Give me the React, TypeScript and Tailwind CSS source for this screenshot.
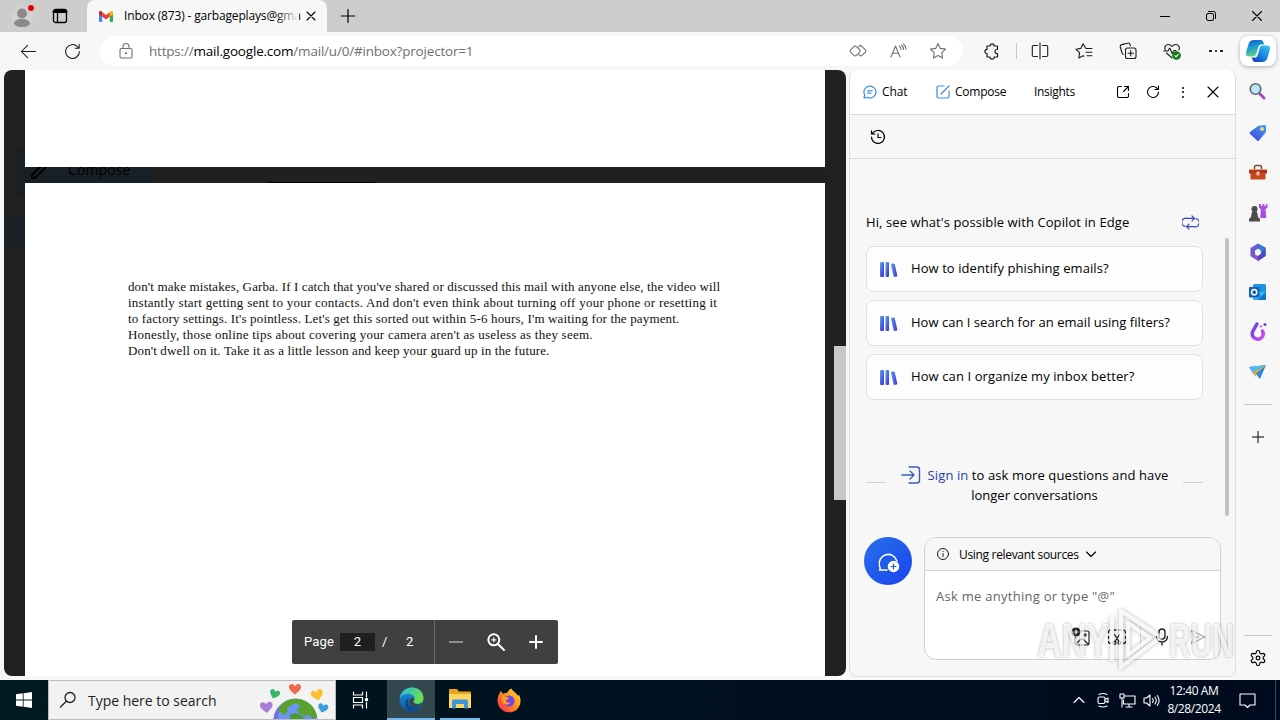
import React from "react";

type IconProps = {
  size?: number;
  box?: string;
  sw?: number;
  className?: string;
  children: React.ReactNode;
};

const Icon = ({ size = 20, box = "0 0 20 20", sw = 1.1, className = "", children }: IconProps) => (
  <svg
    width={size}
    height={size}
    viewBox={box}
    fill="none"
    stroke="currentColor"
    strokeWidth={sw}
    strokeLinecap="round"
    strokeLinejoin="round"
    className={"shrink-0 " + className}
  >
    {children}
  </svg>
);

const Cell = ({ className = "", children }: { className?: string; children: React.ReactNode }) => (
  <div className={"flex h-full shrink-0 items-center justify-center " + className}>{children}</div>
);

const CopilotLogo = () => (
  <svg width="26" height="26" viewBox="0 0 26 26">
    <defs>
      <linearGradient id="cpa" x1="0" y1="0" x2="0.3" y2="1">
        <stop offset="0" stopColor="#1b4fc4" />
        <stop offset="0.45" stopColor="#1597d8" />
        <stop offset="1" stopColor="#5fd08a" />
      </linearGradient>
      <linearGradient id="cpb" x1="1" y1="0" x2="0.2" y2="1">
        <stop offset="0" stopColor="#35d0e8" />
        <stop offset="0.5" stopColor="#1b8fe8" />
        <stop offset="1" stopColor="#1745c0" />
      </linearGradient>
    </defs>
    <path d="M9 2h6.500c2 0 2.700 1 3.200 3l.5 1.500h-2.700c-1.800 0-2.700.9-3.200 2.600l-2 6.700c-.6 2-1.400 2.700-3.200 2.700H4c-2.800 0-3.500-2-2.800-4.700l2.500-8C4.500 3.200 6 2 9 2z" fill="url(#cpa)" />
    <path d="M17 24h-6.500c-2 0-2.700-1-3.200-3l-.5-1.500h2.700c1.800 0 2.700-.9 3.200-2.600l2-6.700c.6-2 1.400-2.700 3.200-2.700H22c2.800 0 3.500 2 2.800 4.700l-2.500 8c-.8 2.600-2.300 3.800-5.300 3.800z" fill="url(#cpb)" />
  </svg>
);

const TitleBar = () => (
  <div className="flex h-8 bg-[#cdcdcd]">
    <Cell className="w-11">
      <svg width="26" height="26" viewBox="0 0 26 26">
        <circle cx="13" cy="14" r="10.500" fill="#d6d2d1" />
        <circle cx="13" cy="10.500" r="5" fill="#8a8a8a" />
        <path d="M5 21c0-3 3-5 8-5s8 2 8 5c-2 2.500-5 3-8 3s-6-.5-8-3z" fill="#8a8a8a" />
        <circle cx="22" cy="5" r="3" fill="#e60000" />
      </svg>
    </Cell>
    <Cell className="w-8">
      <Icon size={16} box="0 0 16 16" sw={1.3}>
        <rect x="1.500" y="1.500" width="13" height="13" rx="2" />
        <path d="M2 3.500h12" strokeWidth="3" />
        <path d="M5.500 5v9" />
      </Icon>
    </Cell>
    <div className="ml-[11px] flex h-8 w-[240px] items-center rounded-t-lg bg-[#f7f7f7]">
      <svg width="14" height="11" viewBox="0 0 14 11" className="ml-3">
        <path d="M0 1.500V10a1 1 0 0 0 1 1h2.200V4.500z" fill="#4285f4" />
        <path d="M14 1.500V10a1 1 0 0 1-1 1h-2.200V4.500z" fill="#34a853" />
        <path d="M10.800 1.200v4.500L14 3.300V1.500C14 0 12.500-.4 11.500.5z" fill="#fbbc04" />
        <path d="M3.200 5.700V1.200L7 4l3.800-2.800v4.500L7 8.500z" fill="#ea4335" />
        <path d="M0 1.500v1.800l3.200 2.400V1.200L2.500.5C1.500-.4 0 0 0 1.500z" fill="#c5221f" />
      </svg>
      <div className="relative ml-[11px] w-[175px] whitespace-nowrap text-[12px] tracking-[-0.16px] text-black">
        Inbox (873) - garbageplays@gma
        <div className="absolute inset-y-0 right-0 w-6 bg-linear-to-r from-transparent to-[#f7f7f7]" />
      </div>
      <Icon size={10} box="0 0 10 10" className="ml-[7px]">
        <path d="M1 1l8 8M9 1l-8 8" />
      </Icon>
    </div>
    <Cell className="w-[42px]">
      <Icon size={14} box="0 0 14 14" sw={1.2}>
        <path d="M7 .5v13M.5 7h13" />
      </Icon>
    </Cell>
    <div className="flex-1" />
    <Cell className="w-[46px]">
      <Icon size={10} box="0 0 10 10" sw={1}><path d="M0 5.500h10" /></Icon>
    </Cell>
    <Cell className="w-[46px]">
      <Icon size={10} box="0 0 10 10" sw={1}>
        <rect x=".5" y="2.500" width="7" height="7" rx="1.500" />
        <path d="M2.500.5h5a2 2 0 0 1 2 2v5" />
      </Icon>
    </Cell>
    <Cell className="w-[46px]">
      <Icon size={10} box="0 0 10 10" sw={1.1}><path d="M.5.5l9 9M9.500.5l-9 9" /></Icon>
    </Cell>
  </div>
);

const Toolbar = () => (
  <div className="flex h-[38px] bg-[#f7f7f7] pt-1 pb-1 text-[#1b1b1b]">
    <Cell className="ml-1.5 w-11">
      <Icon size={19}><path d="M17.500 10h-15M9 3.500L2.500 10 9 16.500" /></Icon>
    </Cell>
    <Cell className="w-11">
      <Icon size={19}><path d="M17.300 10a7.300 7.300 0 1 1-2.200-5.200L17 6.500M17 2.500v4h-4" /></Icon>
    </Cell>
    <div className="ml-1.5 flex w-[863px] items-center rounded-full bg-white pl-1.5 pr-[5px] text-[#707070]">
      <Cell className="w-10">
        <Icon size={18} box="0 0 18 18">
          <rect x="3" y="6.500" width="12" height="9.500" rx="1.500" />
          <path d="M6 6.500V4.500a3 3 0 0 1 6 0v2" />
          <circle cx="9" cy="11.300" r=".5" fill="currentColor" />
        </Icon>
      </Cell>
      <div className="ml-[3px] flex-1 whitespace-nowrap text-[13.500px] tracking-[-0.2px]">
        https://<span className="text-black">mail.google.com</span>/mail/u/0/#inbox?projector=1
      </div>
      <Cell className="w-10">
        <Icon size={18} box="0 0 18 18">
          <path d="M8.800 5.800L7.400 4.600a1.800 1.800 0 0 0-2.400 0L1.800 7.700a1.800 1.800 0 0 0 0 2.600L5 13.400a1.800 1.800 0 0 0 2.400 0l3.100-3.100a1.800 1.800 0 0 0 0-2.600z" />
          <path d="M9.700 4.900a1.800 1.800 0 0 1 3.300-.3l3.200 3.100a1.800 1.800 0 0 1 0 2.600L13 13.400a1.800 1.800 0 0 1-2.400 0l-.9-.8" />
        </Icon>
      </Cell>
      <Cell className="w-10">
        <Icon size={18} box="0 0 18 18">
          <path d="M2 15L6.500 4 11 15M3.600 11.300h5.800M10.500 4.200c1 .8 1.500 1.800 1.500 3.300M12.500 3c1.400 1.100 2 2.600 2 4.500M14.500 1.800c1.700 1.400 2.500 3.200 2.500 5.500" />
        </Icon>
      </Cell>
      <Cell className="w-10">
        <Icon size={18} box="0 0 18 18">
          <path d="M9 1.500l2.300 4.900 5.200.7-3.800 3.700.9 5.300L9 13.600l-4.600 2.500.9-5.300L1.500 7.100l5.200-.7z" />
        </Icon>
      </Cell>
    </div>
    <Cell className="ml-[7px] w-11">
      <Icon size={18} box="0 0 18 18" sw={1.2}>
        <path d="M4 4h3a2.100 2.100 0 0 1 4.200 0H14.500v3.500H14a2 2 0 0 0 0 4h.5V15h-3.300a2.100 2.100 0 0 1-4.200 0H4v-3.400a2.100 2.100 0 0 1 0-4.200z" />
      </Icon>
    </Cell>
    <Cell className="w-1"><div className="h-4 w-px bg-[#c8c8c8]" /></Cell>
    <Cell className="w-11">
      <Icon size={18} box="0 0 18 18">
        <path d="M9 1v16M6.500 3.500h-4a1.200 1.200 0 0 0-1.200 1.200v8.600a1.200 1.200 0 0 0 1.200 1.200h4M11.500 3.500h4a1.200 1.200 0 0 1 1.200 1.200v8.600a1.200 1.200 0 0 1-1.200 1.200h-4" />
      </Icon>
    </Cell>
    <Cell className="w-11">
      <Icon size={18} box="0 0 18 18">
        <path d="M10.500 6L8 1.800 5.800 6.400 1 7.300l3.600 3.400-.8 5.300L8 13.700l1 .5M11 6.500h6M11 10.200h6M12 13.800h5" />
      </Icon>
    </Cell>
    <Cell className="w-11">
      <Icon size={18} box="0 0 18 18">
        <rect x="6.500" y="6" width="10.500" height="10.500" rx="2" />
        <path d="M11.700 8.500v5.500M9 11.200h5.500M4.500 12.500A2 2 0 0 1 3 11L1.300 5a2 2 0 0 1 1.400-2.400L8.500 1.200A2 2 0 0 1 11 2.500l.5 1.300" />
      </Icon>
    </Cell>
    <Cell className="w-11">
      <Icon size={18} box="0 0 18 18">
        <path d="M2.200 8C.8 5 3 2.500 5.200 2.500c1.800 0 3 .9 3.800 2 .8-1.100 2-2 3.800-2 2.400 0 4.500 2.500 3.200 5.500M3.500 11l5.500 5M1 9h4l1.700-3 2.500 5.500L11 8.500h2" />
        <circle cx="13.500" cy="13.500" r="3.800" fill="#107c10" stroke="#107c10" />
        <path d="M11.800 13.600l1.200 1.200 2.200-2.400" stroke="#fff" />
      </Icon>
    </Cell>
    <Cell className="w-11 gap-[3px]">
      <div className="size-[2.500px] rounded-full bg-black" />
      <div className="size-[2.500px] rounded-full bg-black" />
      <div className="size-[2.500px] rounded-full bg-black" />
    </Cell>
    <Cell className="ml-0.5 w-9 rounded-lg bg-white shadow-[0_1px_4px_rgba(0,0,0,0.3)]"><CopilotLogo /></Cell>
  </div>
);

const letter = [
  { text: "don't make mistakes, Garba. If I catch that you've shared or discussed this mail with anyone else, the video will", cls: "tracking-[0.12px]" },
  { text: "instantly start getting sent to your contacts. And don't even think about turning off your phone or resetting it", cls: "tracking-[0.255px]" },
  { text: "to factory settings. It's pointless. Let's get this sorted out within 5-6 hours, I'm waiting for the payment.", cls: "tracking-[0.148px]" },
  { text: "Honestly, those online tips about covering your camera aren't as useless as they seem.", cls: "tracking-[0.227px]" },
  { text: "Don't dwell on it. Take it as a little lesson and keep your guard up in the future.", cls: "tracking-[0.127px]" },
];

const Viewer = () => (
  <div className="relative ml-1 flex h-[606px] w-[842px] overflow-hidden rounded-lg bg-[#212121]">
    <div className="w-[21px] pt-[78px]">
      <div className="ml-3 h-12 bg-[#1a1f23]" />
      <div className="mt-[18px] h-8 bg-[#1b2027]" />
    </div>
    <div className="flex w-[800px] flex-col">
      <div className="h-[97px] bg-white" />
      <div className="flex h-4 overflow-hidden bg-[#202020]">
        <div className="flex h-4 w-[128px] bg-[#172027]">
          <Icon size={20} sw={2} className="ml-1 -mt-1.5 text-black">
            <path d="M3 17v-3L14 3l3 3L6 17z" />
          </Icon>
          <span className="-mt-[7px] ml-[19px] text-[14px] leading-5 tracking-[0.1px] text-black">Compose</span>
        </div>
        <div className="ml-[114px] mt-[15px] h-px w-[108px] bg-black" />
      </div>
      <div className="flex-1 bg-white pt-24 pl-[103px]">
        {letter.map((line) => (
          <p key={line.text} className={"h-4 whitespace-nowrap font-['Liberation_Serif',serif] text-[13px] leading-4 text-[#111] " + line.cls}>
            {line.text}
          </p>
        ))}
      </div>
    </div>
    <div className="ml-[9px] w-3 pt-[276px]">
      <div className="h-[154px] bg-[#c8c8c8]" />
    </div>

    <div className="absolute left-[288px] top-[550px] flex h-11 w-[266px] items-center rounded-xs bg-[#404040] font-[Roboto,sans-serif] text-[13px] text-white">
      <span className="ml-3 w-9 tracking-[0.2px]">Page</span>
      <span className="h-[18px] w-[35px] bg-[#1f1f1f] text-center leading-[18px]">2</span>
      <span className="ml-[7px] w-[18px]">/</span>
      <span className="ml-[6px] w-7">2</span>
      <div className="h-full w-px bg-[#6a6a6a]" />
      <Cell className="w-[42px]"><div className="h-[1.500px] w-[14px] bg-[#8c8c8c]" /></Cell>
      <Cell className="w-[38px]">
        <Icon size={20} sw={2}>
          <circle cx="7.800" cy="7.800" r="5.500" />
          <path d="M12 12l6 6" />
          <path d="M7.800 5.800v4M5.800 7.800h4" strokeWidth="1.200" />
        </Icon>
      </Cell>
      <Cell className="w-[42px]">
        <Icon size={14} box="0 0 14 14" sw={2}><path d="M7 1v12M1 7h12" /></Icon>
      </Cell>
    </div>
  </div>
);

const Books = () => (
  <svg width="18" height="17" viewBox="0 0 18 17">
    <defs>
      <linearGradient id="bk" x1="0" y1="0" x2="1" y2="1">
        <stop offset="0" stopColor="#5ea5f0" />
        <stop offset="1" stopColor="#3a2fd0" />
      </linearGradient>
    </defs>
    <rect x="0" y="1" width="4" height="15" rx="1" fill="url(#bk)" />
    <rect x="5.500" y="1" width="3.500" height="15" rx="1" fill="url(#bk)" />
    <rect x="12.200" y="2.500" width="3.800" height="13.500" rx="1" fill="url(#bk)" transform="rotate(-13 14 9)" />
  </svg>
);

const prompts = [
  { text: "How to identify phishing emails?", cls: "tracking-[0.07px]" },
  { text: "How can I search for an email using filters?", cls: "tracking-[0.02px]" },
  { text: "How can I organize my inbox better?", cls: "tracking-[0.1px]" },
];

const Copilot = () => (
  <div className="relative ml-[3px] flex h-[607px] w-[387px] flex-col rounded-lg border border-t-0 border-[#dedede] bg-[#f7f7f7] text-black">
    <div className="flex h-[45px] items-center rounded-t-lg border-b border-[#d8d8d8] bg-white">
      <Icon size={14} box="0 0 14 14" sw={1.2} className="ml-[13px] text-[#3d8fe0]">
        <path d="M1 13l.7-3A6 6 0 1 1 4 12.300zM4.700 5.800h4.600M4.700 8.200h3" />
      </Icon>
      <span className="ml-[5px] w-[55px] text-[12px] tracking-[-0.1px]">Chat</span>
      <Icon size={14} box="0 0 14 14" sw={1.2} className="-ml-px text-[#3f86dd]">
        <path d="M8 1H2.500A1.500 1.500 0 0 0 1 2.500v9A1.500 1.500 0 0 0 2.500 13h9a1.500 1.500 0 0 0 1.500-1.500V6M13 1L6 8l-1 1" />
      </Icon>
      <span className="ml-[5px] w-[79px] text-[12px] tracking-[-0.25px]">Compose</span>
      <span className="w-[74px] pb-px text-[12px] tracking-[-0.3px]">Insights</span>
      <Cell className="w-[30px]">
        <Icon size={14} box="0 0 14 14" sw={1.1}>
          <path d="M5.500 1.500H3A1.500 1.500 0 0 0 1.500 3v8A1.500 1.500 0 0 0 3 12.500h8a1.500 1.500 0 0 0 1.500-1.500V8.500M8.500 1.500h4v4M12.500 1.500L7.500 6.500" />
        </Icon>
      </Cell>
      <Cell className="w-[30px]">
        <Icon size={14} box="0 0 14 14"><path d="M12.500 7a5.500 5.500 0 1 1-1.700-4l1.500 1.500M12.500 1v3.500H9" /></Icon>
      </Cell>
      <Cell className="w-[30px] flex-col gap-[2.500px]">
        <div className="size-[2px] rounded-full bg-black" />
        <div className="size-[2px] rounded-full bg-black" />
        <div className="size-[2px] rounded-full bg-black" />
      </Cell>
      <Cell className="w-[30px]">
        <Icon size={12} box="0 0 12 12"><path d="M1 1l10 10M11 1L1 11" /></Icon>
      </Cell>
    </div>
    <div className="flex h-11 items-center border-b border-[#d8d8d8] pl-5">
      <Icon size={16} box="0 0 16 16" sw={1.2}>
        <path d="M2.200 5A6.500 6.500 0 1 1 1.500 8M1.500 1.800V5H5M8 4.800V8.500h3" />
      </Icon>
    </div>
    <div className="mt-[54px] flex h-5 items-center pl-4 text-[13px]">
      <span className="w-[316px] whitespace-nowrap tracking-[0.09px]">Hi, see what's possible with Copilot in Edge</span>
      <Icon size={17} box="0 0 17 17" sw={1.2} className="-mt-0.5 text-[#3047b8]">
        <path d="M3 12.300A4 4 0 0 1 4.700 4.300H12M10 1.800l2.500 2.500L10 6.800M14 4.700a4 4 0 0 1-1.700 8H5M7 10.200l-2.500 2.500L7 15.200" />
      </Icon>
    </div>
    <div className="mt-[13px] ml-4 flex w-[337px] flex-col gap-2">
      {prompts.map((p) => (
        <div key={p.text} className="flex h-[46px] items-center rounded-lg border border-[#e1e1e1] bg-[#fdfdfd] pl-[13px]">
          <Books />
          <span className={"ml-[13px] whitespace-nowrap text-[13px] " + p.cls}>{p.text}</span>
        </div>
      ))}
    </div>
    <div className="mt-[65px] ml-4 flex w-[337px] items-start">
      <div className="mt-[17px] h-px w-5 bg-[#cfcfcf]" />
      <div className="flex-1 text-center text-[13px] leading-5">
        <div className="flex items-center justify-center whitespace-nowrap tracking-[0.1px]">
          <Icon size={20} sw={1.4} className="mr-[7px] text-[#3a5bbf]">
            <path d="M1 10h12M9 6l4 4-4 4M8 2h8a2.500 2.500 0 0 1 2.500 2.500v11A2.500 2.500 0 0 1 16 18H8" />
          </Icon>
          <span><span className="text-[#1f3fae]">Sign in</span> to ask more questions and have</span>
        </div>
        <div>longer conversations</div>
      </div>
      <div className="mt-[17px] h-px w-5 bg-[#cfcfcf]" />
    </div>
    <div className="mt-8 flex pl-3.5">
      <div className="flex size-12 items-center justify-center rounded-full bg-linear-to-br from-[#2a6fe8] to-[#1d40f0] text-white">
        <Icon size={24} box="0 0 24 24" sw={1.5}>
          <path d="M11 21H3.500c1-.8 1-1.800 0-4A9 9 0 1 1 21 12" />
          <circle cx="17.500" cy="17.500" r="5" fill="#fff" />
          <path d="M17.500 15v5M15 17.500h5" stroke="#2456e8" strokeWidth="1.200" />
        </Icon>
      </div>
      <div className="ml-3 flex h-[123px] w-[297px] flex-col overflow-hidden rounded-xl border border-[#cfcfcf] bg-white">
        <div className="flex h-[33px] shrink-0 items-center border-b border-[#d5d5d5] bg-[#f7f7f7] pl-3">
          <Icon size={12} box="0 0 12 12" sw={0.9}>
            <circle cx="6" cy="6" r="5.500" />
            <path d="M6 5.500v3M6 3.500v.1" />
          </Icon>
          <span className="ml-[10px] mr-1.5 whitespace-nowrap pt-px text-[12px] tracking-[-0.32px]">Using relevant sources</span>
          <Icon size={12} box="0 0 12 12"><path d="M1.500 4L6 8.500 10.500 4" /></Icon>
        </div>
        <div className="mt-[15px] pl-[11px] text-[13px] leading-5 tracking-[0.27px] text-[#666]">Ask me anything or type "@"</div>
        <div className="mt-4 flex h-[30px] pl-[138px] text-[#222]">
          <Cell className="w-9">
            <Icon size={20} sw={1.2}>
              <path d="M10 4h6a2 2 0 0 1 2 2v10a2 2 0 0 1-2 2H6a2 2 0 0 1-2-2v-6M5 17l5-5h2l5 5" />
              <circle cx="14" cy="8" r="1.200" />
              <circle cx="5" cy="5" r="4" fill="#222" />
              <path d="M5 3v4M3 5h4" stroke="#fff" />
            </Icon>
          </Cell>
          <Cell className="w-9">
            <Icon size={20} sw={1.3}>
              <path d="M1.500 6V5A2 2 0 0 1 3.500 3M7 3h2M12 3h2M17 3.200a2 2 0 0 1 1.500 2V6M1.500 9.500v2M18.500 9.500v2M1.500 14.500a2 2 0 0 0 2 2M18.500 14.500a2 2 0 0 1-2 2" />
              <path d="M7.500 7.500l4.500 7M12.500 7.500L8 14.500" />
              <circle cx="7.500" cy="15.800" r="1.500" />
              <circle cx="12.500" cy="15.800" r="1.500" />
            </Icon>
          </Cell>
          <Cell className="w-[11px]"><div className="h-5 w-px bg-[#d0d0d0]" /></Cell>
          <Cell className="w-8">
            <Icon size={18} box="0 0 18 18" sw={1.4}>
              <rect x="6" y="1" width="6" height="10" rx="3" />
              <path d="M3.500 8.500a5.500 5.500 0 0 0 11 0M9 14v3" />
            </Icon>
          </Cell>
          <Cell className="w-10 text-[#a5a5a5]">
            <Icon size={16} box="0 0 16 16"><path d="M1.500 1.500L15 8 1.500 14.500 3.500 8zM3.500 8H9" /></Icon>
          </Cell>
        </div>
      </div>
    </div>
    <div className="absolute left-[375px] top-[168px] h-[278px] w-1 rounded-full bg-[#c2c2c2]" />
  </div>
);

const Sidebar = () => (
  <div className="flex w-11 flex-col items-center pt-[3px]">
    <svg width="20" height="320" viewBox="0 0 20 320" className="shrink-0">
      <defs>
        <linearGradient id="tag" x1="1" y1="0" x2="0" y2="1"><stop stopColor="#3da2f5" /><stop offset="1" stopColor="#4040e0" /></linearGradient>
        <linearGradient id="drp" x1="0" y1="0" x2="1" y2="1"><stop stopColor="#5b45e6" /><stop offset="1" stopColor="#d44df0" /></linearGradient>
      </defs>
      {/* search */}
      <path d="M12 21l4 4" stroke="#a548c8" strokeWidth="3" strokeLinecap="round" />
      <circle cx="7.500" cy="16" r="5.300" fill="#bfe6f5" stroke="#5c6670" strokeWidth="1.600" />
      {/* shopping */}
      <path d="M10 53l6-1a1.500 1.500 0 0 1 2 1.500v5.500l-7 8.500q-1 1-2 0L2 61q-1-1 0-2z" fill="url(#tag)" />
      <circle cx="14" cy="56" r="2" fill="#f6d56b" />
      {/* tools */}
      <path d="M6.500 96v-2a1.500 1.500 0 0 1 1.500-1.500h4a1.500 1.500 0 0 1 1.500 1.500v2" fill="none" stroke="#7b4a3a" strokeWidth="1.500" />
      <path d="M1 96.500h18v3.500l-1.500 1v4.500a1 1 0 0 1-1 1h-13a1 1 0 0 1-1-1V101L1 100z" fill="#c9461c" />
      <path d="M1 97h18v3H1z" fill="#b03a16" />
      <rect x="8.500" y="98.500" width="3" height="4" rx="1" fill="#f3c9b8" />
      {/* games */}
      <path d="M11 131h2v2h1.500v-2h2v2H18v-2h1.500v4l-2 1 .8 9h-6l.5-9-1.800-1z" fill="#a64fe0" />
      <circle cx="6.500" cy="136" r="3" fill="#4b4b4b" />
      <path d="M4 138.500h5l1 5.500 2 2v2.500H1V146l2-2z" fill="#4b4b4b" />
      {/* microsoft 365 */}
      <path d="M10 170.500l7.500 4v7.500l-5-2.500V177L7 174z" fill="#2f7fd8" />
      <path d="M10 170.500l-7.500 4.500v8l4.500 3v-8.500l5-3z" fill="#6b5bd6" />
      <path d="M3 183l7 5 7.500-5v-4.500L10 183l-3-1.500z" fill="#8a55c8" />
      <path d="M17.500 174.500V183L10 188v-5l4-3.500z" fill="#4a49c0" />
      <circle cx="10" cy="179.300" r="2.600" fill="#f7f7f7" />
      {/* outlook */}
      <rect x="5" y="211" width="13" height="16" rx="1.500" fill="#1d93e0" />
      <path d="M5 219l13 0v7.500H5z" fill="#35b8f1" />
      <path d="M18 219l-9 8h8a1 1 0 0 0 1-1z" fill="#1274c4" />
      <rect x="1" y="214" width="10.500" height="10.500" rx="1" fill="#0f62b5" />
      <circle cx="6.200" cy="219.200" r="2.600" fill="none" stroke="#fff" strokeWidth="1.500" />
      {/* drop */}
      <path d="M9 251l-4.500 8a5.500 5.500 0 1 0 10-1" fill="none" stroke="url(#drp)" strokeWidth="3.500" strokeLinecap="round" />
      <circle cx="17" cy="251.500" r="1.600" fill="#7a3fe0" />
      <circle cx="13" cy="253.500" r="1.100" fill="#9a4fe8" />
      {/* send */}
      <path d="M1 294l17-2-6 14-4-5z" fill="#2f86dc" />
      <path d="M1 294l17-2-10 8.500L4.500 300z" fill="#55b9ee" />
      <path d="M4.500 300L18 292l-10 8.800V304z" fill="#e8ad2c" />
    </svg>
    <div className="mt-[11px] h-px w-7 shrink-0 bg-[#c4c4c4]" />
    <Icon size={12} box="0 0 12 12" sw={1} className="mt-[26px]"><path d="M6 0v12M0 6h12" /></Icon>
    <div className="mt-[192px] h-px w-7 shrink-0 bg-[#c4c4c4]" />
    <Icon size={18} box="0 0 24 24" sw={1.6} className="mt-[13px]">
      <path d="M12.220 2h-.44a2 2 0 0 0-2 2v.18a2 2 0 0 1-1 1.730l-.43.25a2 2 0 0 1-2 0l-.15-.08a2 2 0 0 0-2.730.73l-.22.38a2 2 0 0 0 .73 2.730l.15.1a2 2 0 0 1 1 1.720v.51a2 2 0 0 1-1 1.740l-.15.09a2 2 0 0 0-.73 2.730l.22.38a2 2 0 0 0 2.730.73l.15-.08a2 2 0 0 1 2 0l.43.25a2 2 0 0 1 1 1.730V20a2 2 0 0 0 2 2h.44a2 2 0 0 0 2-2v-.18a2 2 0 0 1 1-1.730l.43-.25a2 2 0 0 1 2 0l.15.08a2 2 0 0 0 2.730-.73l.22-.39a2 2 0 0 0-.73-2.730l-.15-.08a2 2 0 0 1-1-1.740v-.5a2 2 0 0 1 1-1.740l.15-.09a2 2 0 0 0 .73-2.730l-.22-.38a2 2 0 0 0-2.730-.73l-.15.08a2 2 0 0 1-2 0l-.43-.25a2 2 0 0 1-1-1.730V4a2 2 0 0 0-2-2z" />
      <circle cx="12" cy="12" r="2.500" />
    </Icon>
  </div>
);

const heart = "M0 2.500C-1.500-1.500-6.500-.5-6 3.500-5.500 6.500-2 8.500 0 10.500 2 8.500 5.500 6.500 6 3.500 6.500-.5 1.500-1.500 0 2.500z";

const Taskbar = () => (
  <div className="flex h-10 bg-linear-to-r from-[#001820] to-[#000a1e] text-white">
    <Cell className="w-12">
      <svg width="16" height="16" viewBox="0 0 16 16" fill="#fff">
        <path d="M0 2.300L6.800 1.300V7.600H0zM7.600 1.200L16 0v7.600H7.600zM0 8.400h6.800v6.300L0 13.700zM7.600 8.400H16V16l-8.400-1.200z" />
      </svg>
    </Cell>
    <div className="flex w-72 items-center border border-[#b9bdbf] bg-[#f2f2f2] text-[#222]">
      <Icon size={18} box="0 0 18 18" sw={1.3} className="ml-2.5">
        <circle cx="11" cy="6.500" r="5" />
        <path d="M7.300 10.200L1.500 16" />
      </Icon>
      <span className="ml-[11px] w-[170px] whitespace-nowrap text-[14px] tracking-[-0.02px]">Type here to search</span>
      <svg width="74" height="38" viewBox="0 0 74 38">
        <path d={heart} transform="translate(37 3)" fill="#f0674c" />
        <path d={heart} transform="translate(18 9) rotate(20) scale(.85)" fill="#35b56d" />
        <path d={heart} transform="translate(58 9) rotate(-15)" fill="#fbbf2d" />
        <path d={heart} transform="translate(8 21) rotate(-5) scale(1.050)" fill="#a77bd8" />
        <path d={heart} transform="translate(66 23) rotate(15) scale(.85)" fill="#3c9be0" />
        <circle cx="37.500" cy="39.500" r="22" fill="#6a95f2" />
        <path d="M28 20c6-3 14-3.500 21 1 6 3.500 9 9 10 15l-4 2-4-4-4 1-5-2-3-4 3-4-4-3-4 2-5 3 1 4-4 3-3-3-4 1c1-4 4-9 9-12z" fill="#5aa02c" />
        <path d="M32 34l5-2 6 2 4 4H32z" fill="#4f9a2e" />
        <path d="M15.500 38a22 22 0 0 1 6-13l-2 13z" fill="#7d6be0" />
      </svg>
    </div>
    <Cell className="w-[49px]">
      <Icon size={18} box="0 0 18 18" sw={1.2}>
        <path d="M1.500 1v3h9V1M1.500 17v-3h9v3M1.500 6.500h9v5h-9zM14.500 1v5M14.500 11v6" />
        <rect x="13.500" y="7.500" width="2" height="2" fill="currentColor" />
      </Icon>
    </Cell>
    <div className="ml-0.5 flex w-12 items-center justify-center border-b-2 border-[#76b9ed] bg-[#33474f]">
      <svg width="25" height="25" viewBox="0 0 24 24">
        <defs>
          <linearGradient id="eg1" x1="0" y1="0" x2="1" y2=".5"><stop stopColor="#2bb5e8" /><stop offset="1" stopColor="#6be04a" /></linearGradient>
          <linearGradient id="eg2" x1="0" y1="0" x2="0" y2="1"><stop stopColor="#2098e0" /><stop offset="1" stopColor="#0c59a4" /></linearGradient>
        </defs>
        <circle cx="12" cy="12" r="11.500" fill="url(#eg2)" />
        <path d="M.6 11C2 4 7 .5 12.500.5 19 .5 23.500 5 23.500 10.500c0 3.500-2.500 5.500-5.500 5.500s-4.300-1-4.300-2c0-.8 1.300-1.200 1.300-3C15 8.500 12 6.500 8.500 6.500S2 8 .6 11z" fill="url(#eg1)" />
        <path d="M10 10c-2 2-1.500 6 .5 8s6 2.500 9.500.5c-2 3-5 4.800-8 5-4.500-1-6.500-4.500-6-8s2-5 4-5.500z" fill="#114a8b" />
        <path d="M11 11c2-1.500 4 0 3.500 1.500S13 14 14.500 15.500 19 17 22 15c-.5 2-1.500 3.500-3 4-3 1-6 .5-8-2s-1.500-4.500 0-6z" fill="#33474f" />
      </svg>
    </div>
    <div className="ml-[5px] flex w-10 items-center justify-center border-b-2 border-[#76b9ed]">
      <svg width="22" height="20" viewBox="0 0 22 20">
        <path d="M0 1a1 1 0 0 1 1-1h7l2 2.500h11a1 1 0 0 1 1 1V19H0z" fill="#e8a317" />
        <path d="M0 5h22v14H0z" fill="#fcd462" />
        <path d="M3 19.500V12a1.500 1.500 0 0 1 1.500-1.500h13A1.500 1.500 0 0 1 19 12v7.500h-4V15H7v4.500z" fill="#3d94d6" />
      </svg>
    </div>
    <Cell className="ml-[5px] w-12">
      <svg width="24" height="25" viewBox="0 0 24 25">
        <defs>
          <linearGradient id="ff" x1="1" y1="0" x2="0" y2="1"><stop stopColor="#ffe13c" /><stop offset=".5" stopColor="#ff8a1f" /><stop offset="1" stopColor="#f5185f" /></linearGradient>
        </defs>
        <path d="M4 3l2 3c1-1 2.500-1.200 4-1 1-2 2-3.500 4.500-4.500C15 3 20 5 21 8l.8-1.500C25 12 23.500 18 20 21.500s-11 4-15.500 0S0 12 1 9c.5-2 1-2 1.500-4z" fill="url(#ff)" />
        <circle cx="12" cy="13" r="5.500" fill="#7543e0" />
        <path d="M5 9c3-1 5 0 7 1-.5 1.500-2 1.800-3 2 0 2 2 3.500 4.500 2.500C12 18 6 17 5 13z" fill="#ff9a22" />
      </svg>
    </Cell>
    <div className="flex-1" />
    <Cell className="w-6">
      <Icon size={12} box="0 0 12 12"><path d="M1 8.500l5-5 5 5" /></Icon>
    </Cell>
    <Cell className="w-6">
      <Icon size={16} box="0 0 16 16">
        <rect x="3" y="5" width="7" height="6.500" rx="1.500" />
        <path d="M10 7.500l3-1.500v4.500L10 9M4 2.500q4-2 8 0M4 14q4 2 8 0" />
      </Icon>
    </Cell>
    <Cell className="w-6">
      <Icon size={17} box="0 0 17 17">
        <path d="M6 4h10v8H4.500V8M10 12v3M7 15h6M1 2h4v4H1zM3 6v9" />
      </Icon>
    </Cell>
    <Cell className="w-6">
      <Icon size={17} box="0 0 17 17">
        <path d="M1 6h2.500L7 3v11L3.500 11H1zM9.500 6.500q1.500 2 0 4M12 5q2.500 3.500 0 7M14.300 3.500q3.500 5 0 10" />
      </Icon>
    </Cell>
    <div className="flex w-[62px] flex-col items-center justify-center text-[12px] leading-[18px] tracking-[-0.4px] whitespace-nowrap">
      <span>12:40 AM</span>
      <span>8/28/2024</span>
    </div>
    <Cell className="w-11">
      <Icon size={17} box="0 0 17 17"><path d="M1 2h15v11h-5l-2.500 2.500L6 13H1z" /></Icon>
    </Cell>
    <div className="ml-1.5 mr-1 h-full w-px bg-[#3d4856]" />
  </div>
);

const Watermark = () => (
  <div className="pointer-events-none absolute left-[1037px] top-[605px] flex h-[70px] w-[197px] items-center opacity-80">
    <span className="w-[70px] origin-left scale-x-[0.7] font-['Liberation_Sans',sans-serif] text-[49px] font-bold leading-none text-white/80 [text-shadow:0_0_4px_rgba(0,0,0,0.4)]">ANY</span>
    <svg width="62" height="66" viewBox="0 0 62 66" className="shrink-0 drop-shadow-[0_0_2px_rgba(0,0,0,0.4)]">
      <path d="M14 4L54 30 14 60z M21 16v32L43 31z M5 10v44" fill="none" stroke="#fff" strokeOpacity="0.85" strokeWidth="4" strokeLinejoin="round" />
    </svg>
    <span className="w-[65px] origin-left scale-x-[0.61] font-['Liberation_Sans',sans-serif] text-[49px] font-bold leading-none text-white/80 [text-shadow:0_0_4px_rgba(0,0,0,0.4)]">RUN</span>
  </div>
);

const App = () => {
  return (
    <div className="relative flex h-[720px] w-[1280px] flex-col overflow-hidden bg-[#f7f7f7] font-['Open_Sans',sans-serif]">
      <TitleBar />
      <Toolbar />
      <div className="flex h-[610px]">
        <Viewer />
        <Copilot />
        <Sidebar />
      </div>
      <Taskbar />
      <Watermark />
    </div>
  );
};

export default App;
